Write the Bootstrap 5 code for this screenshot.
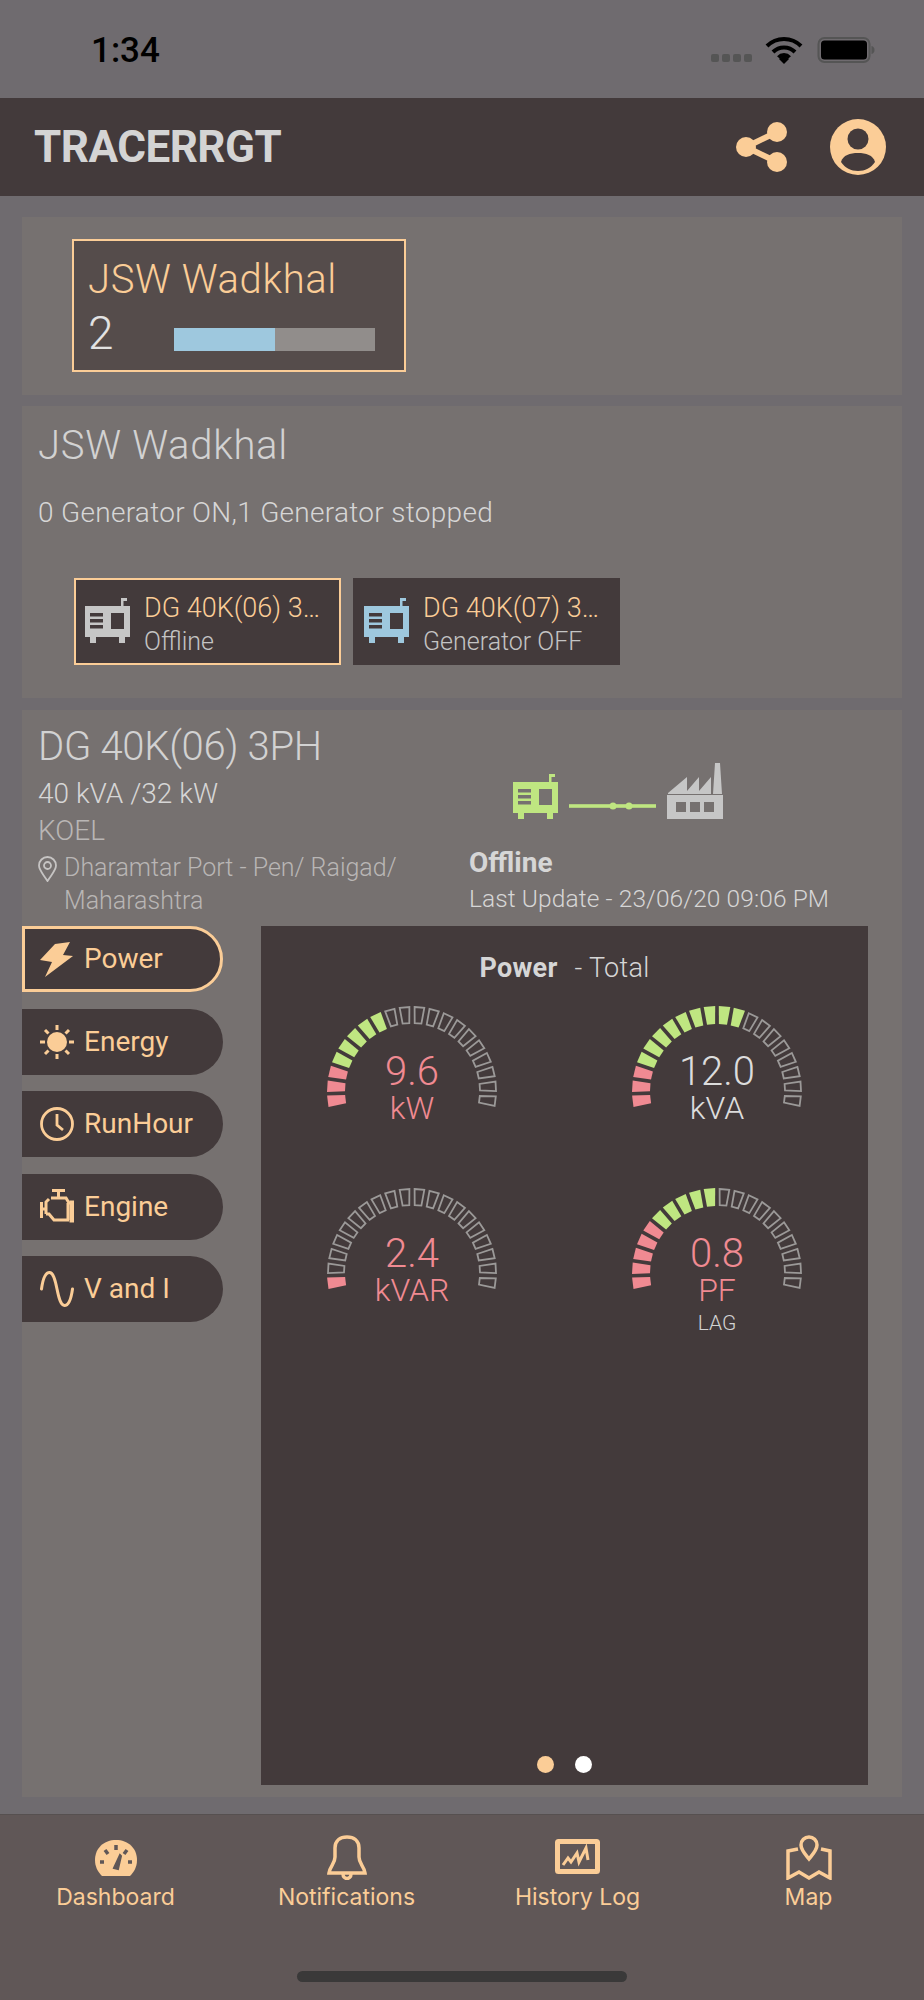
<!DOCTYPE html>
<html lang="en">
<head>
<meta charset="UTF-8">
<meta name="viewport" content="width=device-width, initial-scale=1.0">
<title>TracerRGT</title>
<link href="https://cdn.jsdelivr.net/npm/bootstrap@5.3.3/dist/css/bootstrap.min.css" rel="stylesheet">
<style>
    body {
        background: #6f6b6f;
        font-family: Roboto, sans-serif;
        font-weight: 300;
        color: #d6d6d6;
        width: 924px;
        height: 2000px;
        overflow: hidden;
    }

    /* status bar */
    .status-bar { height: 98px; padding: 33px 49px 0 91px; }
    .status-time { font-size: 35px; line-height: 36px; font-weight: 500; color: #000; }
    .signal-dots { gap: 3px; margin: 21px 13px 0 0; }
    .signal-dots span { width: 8px; height: 8px; border-radius: 2px; background: #555; }
    .status-wifi { margin: 3px 14px 0 0; }
    .status-batt { margin-top: 3px; }

    /* top bar */
    .top-bar { height: 98px; background: #433a3b; padding: 0 38px 0 34px; }
    .brand-name { font-size: 44px; font-weight: 700; color: #d4d4d4; letter-spacing: -.5px; line-height: 1; }
    .top-profile { margin-left: 42px; }

    /* panels */
    .panel-box { background: #767170; margin: 0 22px; border: 0; border-radius: 0; color: inherit; }
    .site-panel { margin-top: 21px; height: 178px; padding: 22px 49px 22px 50px; }
    .site-tile { width: 334px; height: 133px; background: #554c4b; border: 2px solid #fbcd97; padding: 15px 15px 0 14px; }
    .site-name { font-size: 40px; line-height: 48px; color: #fbcd97; letter-spacing: .6px; }
    .site-row { margin-top: 4px; }
    .site-count { font-size: 46px; line-height: 50px; color: #e2e2e2; width: 86px; }
    .site-bar { width: 201px; height: 23px; border-radius: 0; background: #918d8b; margin-top: 12px; }
    .site-bar .progress-bar { background: #9ec8de; }

    .gen-panel { margin-top: 11px; height: 292px; padding: 16px 16px 0; }
    .panel-title { font-size: 40px; line-height: 48px; color: #d2d2d2; letter-spacing: .7px; }
    .gen-summary { font-size: 28px; line-height: 34px; margin-top: 26px; color: #d6d6d6; letter-spacing: .3px; }
    .gen-tiles { margin: 48px 0 0 36px; gap: 12px; }
    .gen-tile { width: 267px; height: 87px; background: #433a3b; border: 2px solid #433a3b; padding: 0 9px; gap: 14px; }
    .gen-tile.is-active { border-color: #fbcd97; }
    .gen-tile svg { flex: none; width: 45px; height: 45px; margin-top: -2px; }
    .gen-tile-text { min-width: 0; flex: 1; padding-top: 5px; }
    .gen-tile-name { font-size: 27px; line-height: 34px; color: #fbcd97; }
    .gen-tile-state { font-size: 25px; line-height: 30px; color: #c4c4c4; margin-top: 2px; }
    .ico-grey { color: #c6c6c6; }
    .ico-blue { color: #9ec8de; }
    .ico-lime { color: #bfe681; }

    .detail-panel { margin-top: 12px; height: 1087px; padding-top: 13px; }
    .detail-head { padding-left: 16px; height: 195px; }
    .detail-left { width: 431px; flex: none; }
    .detail-left .panel-title { letter-spacing: -.3px; }
    .detail-rating { font-size: 28px; line-height: 36px; margin-top: 5px; }
    .detail-make { font-size: 28px; line-height: 36px; margin-top: 1px; color: #b9b6b5; }
    .detail-place { font-size: 25px; line-height: 33px; margin-top: 2px; color: #b9b6b5; gap: 7px; }
    .detail-place svg { flex: none; margin-top: 5px; }
    .flow-icons { margin: 40px 0 0 44px; height: 56px; gap: 11px; }
    .flow-line { margin-bottom: 8px; }
    .detail-state { font-size: 28px; font-weight: 700; line-height: 34px; margin-top: 27px; color: #d6d6d6; }
    .detail-update { font-size: 24.5px; line-height: 34px; margin-top: 2px; letter-spacing: .1px; }

    /* lower part: side buttons and gauge area */
    .detail-body { margin-top: 8px; }
    .side-menu { width: 201px; gap: 16.5px; flex: none; }
    .side-link {
        height: 66px;
        background: #433a3b;
        border-radius: 0 34px 34px 0;
        color: #fbcd97;
        font-size: 28px;
        font-weight: 400;
        padding: 0 0 0 18px;
        gap: 10px;
    }
    .side-link:hover { color: #fbcd97; }
    .side-link svg { flex: none; width: 34px; height: 36px; }
    .side-link.is-active { border: 3px solid #fbcd97; padding-left: 15px; }

    .gauge-panel { width: 607px; height: 859px; margin-left: 38px; background: #433a3b; padding-top: 24px; }
    .gauge-title { font-size: 27px; line-height: 36px; letter-spacing: .3px; }
    .gauge-title b { font-weight: 700; margin-right: 10px; }
    .gauge-grid { display: grid; grid-template-columns: 302px 302px; column-gap: 3px; grid-auto-rows: 182px; margin-top: 17px; }
    .gauge-svg { display: block; margin: 0 auto; }
    .gauge-read { margin-top: -59px; text-align: center; }
    .gauge-value { font-size: 40px; line-height: 40px; }
    .gauge-unit { font-size: 32px; line-height: 32px; }
    .gauge-note { font-size: 21px; line-height: 24px; margin-top: 5px; color: #d2d2d2; }
    .tone-red { color: #f08a92; }
    .tone-grey { color: #dcdcdc; }
    .page-dots { margin-top: auto; margin-bottom: 12px; gap: 21px; }
    .page-dots span { width: 17px; height: 17px; border-radius: 50%; background: #fff; }
    .page-dots span:first-child { background: #fbcd97; }

    /* bottom tabs */
    .tab-bar { margin-top: 17px; height: 186px; background: #605757; border-top: 1px solid #565050; padding-top: 20px; }
    .tab-item { width: 231px; color: #fbcd97; font-family: Inter, sans-serif; font-size: 23px; font-weight: 400; line-height: 28px; }
    .tab-item svg { display: block; height: 45px; margin-bottom: 3px; }
    .home-line { width: 330px; height: 11px; border-radius: 6px; background: #3a3939; margin: 60px auto 0; }
</style>
</head>
<body>

    <!-- generator drawing used in a few places -->
    <svg width="0" height="0" class="position-absolute">
        <symbol id="genset" viewBox="0 0 45 45">
            <path fill="currentColor" fill-rule="evenodd" d="M36 0h6v3h-3.500v5H45v31h-5v6h-6v-6H11v6H5v-6H0V8h36zM26 15v16h13V15zM5 15v3.500h13V15zm0 6v3.500h13V21zm0 6v3.500h13V27z"/>
        </symbol>
    </svg>

    <div class="status-bar d-flex align-items-start">
        <div class="status-time">1:34</div>
        <div class="signal-dots d-flex ms-auto"><span></span><span></span><span></span><span></span></div>
        <svg class="status-wifi" width="38" height="28" viewBox="0 0 38 28">
            <path d="M2 10a24 24 0 0 1 34 0M8 16a15.500 15.500 0 0 1 22 0M13.500 21.500a7.500 7.500 0 0 1 11 0" fill="none" stroke="#000" stroke-width="4"/>
            <path d="M19 28l-5-5 5-4 5 4z"/>
        </svg>
        <svg class="status-batt" width="58" height="28" viewBox="0 0 58 28">
            <rect x="1.500" y="2" width="51" height="24" rx="6" fill="none" stroke="#555" stroke-width="2"/>
            <rect x="4" y="4.500" width="46" height="19" rx="3.500"/>
            <path d="M54.500 10c2 .5 3 2 3 4s-1 3.500-3 4z" fill="#555"/>
        </svg>
    </div>

    <nav class="top-bar d-flex align-items-center">
        <div class="brand-name">TRACERRGT</div>
        <svg class="ms-auto" width="52" height="50" viewBox="0 0 52 50" fill="#fbcd97">
            <path d="M41 10L10 25l31 15" fill="none" stroke="#fbcd97" stroke-width="6"/>
            <circle cx="41" cy="10" r="10"/><circle cx="10" cy="25" r="10"/><circle cx="41" cy="40" r="10"/>
        </svg>
        <svg class="top-profile" width="56" height="56" viewBox="0 0 56 56">
            <circle cx="28" cy="28" r="28" fill="#fbcd97"/>
            <circle cx="28" cy="20" r="10.500" fill="#433a3b"/>
            <path d="M11 43c2-7 9-9 17-9s15 2 17 9c-4 6-10 9-17 9s-13-3-17-9z" fill="#433a3b"/>
        </svg>
    </nav>

    <section class="card panel-box site-panel">
        <div class="site-tile">
            <div class="site-name">JSW Wadkhal</div>
            <div class="site-row d-flex align-items-center">
                <div class="site-count">2</div>
                <div class="progress site-bar"><div class="progress-bar" style="width: 50%"></div></div>
            </div>
        </div>
    </section>

    <section class="card panel-box gen-panel">
        <div class="panel-title">JSW Wadkhal</div>
        <div class="gen-summary">0 Generator ON,1 Generator stopped</div>
        <div class="gen-tiles d-flex">
            <div class="gen-tile is-active d-flex align-items-center">
                <svg class="ico-grey"><use href="#genset"/></svg>
                <div class="gen-tile-text">
                    <div class="gen-tile-name text-truncate">DG 40K(06) 3PH</div>
                    <div class="gen-tile-state">Offline</div>
                </div>
            </div>
            <div class="gen-tile d-flex align-items-center">
                <svg class="ico-blue"><use href="#genset"/></svg>
                <div class="gen-tile-text">
                    <div class="gen-tile-name text-truncate">DG 40K(07) 3PH</div>
                    <div class="gen-tile-state">Generator OFF</div>
                </div>
            </div>
        </div>
    </section>

    <section class="card panel-box detail-panel">
        <div class="detail-head d-flex">
            <div class="detail-left">
                <div class="panel-title">DG 40K(06) 3PH</div>
                <div class="detail-rating">40 kVA /32 kW</div>
                <div class="detail-make">KOEL</div>
                <div class="detail-place d-flex">
                    <svg width="19" height="26" viewBox="0 0 19 26" fill="none" stroke="#c6c4c3" stroke-width="1.800">
                        <path d="M9.500 25C5 18 1 14 1 9.500a8.500 8.500 0 0 1 17 0C18 14 14 18 9.500 25z"/>
                        <circle cx="9.500" cy="9.500" r="3.500"/>
                    </svg>
                    <div>Dharamtar Port - Pen/ Raigad/<br>Maharashtra</div>
                </div>
            </div>
            <div>
                <div class="flow-icons d-flex align-items-end">
                    <svg width="45" height="45" class="ico-lime"><use href="#genset"/></svg>
                    <svg class="flow-line" width="87" height="10" viewBox="0 0 87 10" fill="#bfe681">
                        <rect y="3.200" width="87" height="3.600"/><circle cx="44" cy="5" r="3.500"/><circle cx="60" cy="5" r="3.500"/>
                    </svg>
                    <svg width="56" height="56" viewBox="0 0 56 56" fill="#c6c6c6">
                        <path d="M48 0h5l2 31h-9zM1 30l19-16v14l12-14v14l12-14v17H1z"/>
                        <path fill-rule="evenodd" d="M0 32h56v24H0zM9 39v10h10V39zm14 0v10h10V39zm14 0v10h10V39z"/>
                    </svg>
                </div>
                <div class="detail-state">Offline</div>
                <div class="detail-update">Last Update - 23/06/20 09:06 PM</div>
            </div>
        </div>

        <div class="detail-body d-flex">
            <div class="side-menu nav flex-column">
                <a class="nav-link side-link is-active d-flex align-items-center" href="#">
                    <svg viewBox="0 0 34 36" fill="#fbcd97"><path d="M15 3l15-2-7 13 10 1L5 36l7-15-12-2z"/></svg>Power
                </a>
                <a class="nav-link side-link d-flex align-items-center" href="#">
                    <svg viewBox="0 0 34 36" fill="#fbcd97" stroke="#fbcd97">
                        <circle cx="17" cy="18" r="10" stroke="none"/>
                        <path stroke-width="3" d="M17 1v5M17 30v5M0 18h5M29 18h5M5 6l3.500 3.500M25.500 26.500L29 30M29 6l-3.500 3.500M8.500 26.500L5 30"/>
                    </svg>Energy
                </a>
                <a class="nav-link side-link d-flex align-items-center" href="#">
                    <svg viewBox="0 0 34 36" fill="none" stroke="#fbcd97" stroke-width="2.800">
                        <circle cx="17" cy="18" r="15.500"/><path d="M17 8v11l6 5"/>
                    </svg>RunHour
                </a>
                <a class="nav-link side-link d-flex align-items-center" href="#">
                    <svg viewBox="0 0 34 36" fill="none" stroke="#fbcd97" stroke-width="3">
                        <path d="M12 1.500h13M18.500 2v7M11 9h15l3 5h2M28 14v17M29 31H14l-5-6H6"/>
                        <path d="M9 10l-3 3v12M1.500 13v16M1.500 20H6"/>
                        <path d="M31 13h2v19h-2z"/>
                    </svg>Engine
                </a>
                <a class="nav-link side-link d-flex align-items-center" href="#">
                    <svg viewBox="0 0 34 36" fill="none" stroke="#fbcd97" stroke-width="3" stroke-linecap="round">
                        <path d="M1.500 18C3 7 6 1.500 9.500 1.500S15 8 17 18s4 16.500 7.500 16.500S31 29 32.500 18"/>
                    </svg>V and I
                </a>
            </div>

            <div class="gauge-panel d-flex flex-column">
                <div class="gauge-title text-center"><b>Power</b> - Total</div>
                <div class="gauge-grid">
                    <div>
                        <svg class="gauge-svg" width="180" height="108" data-red="3" data-green="5"></svg>
                        <div class="gauge-read tone-red"><div class="gauge-value">9.6</div><div class="gauge-unit">kW</div></div>
                    </div>
                    <div>
                        <svg class="gauge-svg" width="180" height="108" data-red="3" data-green="9"></svg>
                        <div class="gauge-read tone-grey"><div class="gauge-value">12.0</div><div class="gauge-unit">kVA</div></div>
                    </div>
                    <div>
                        <svg class="gauge-svg" width="180" height="108" data-red="1" data-green="0"></svg>
                        <div class="gauge-read tone-red"><div class="gauge-value">2.4</div><div class="gauge-unit">kVAR</div></div>
                    </div>
                    <div>
                        <svg class="gauge-svg" width="180" height="108" data-red="5" data-green="5"></svg>
                        <div class="gauge-read tone-red"><div class="gauge-value">0.8</div><div class="gauge-unit">PF</div><div class="gauge-note">LAG</div></div>
                    </div>
                </div>
                <div class="page-dots d-flex justify-content-center"><span></span><span></span></div>
            </div>
        </div>
    </section>

    <footer class="tab-bar">
        <div class="d-flex text-center">
            <div class="tab-item d-flex flex-column align-items-center">
                <svg width="42" viewBox="0 0 42 45">
                    <path d="M7 41C3 37 0 32 0 25 0 13 9 5 21 5s21 8 21 20c0 7-3 12-7 16z" fill="#fbcd97"/>
                    <path d="M21 10v5M10 15l3 4M32 15l-3 4M5 27h4M33 27h4" stroke="#605757" stroke-width="3.500" fill="none"/>
                    <path d="M19 33l6-13 1 1-3 13z" fill="#605757" stroke="#605757" stroke-width="2"/>
                </svg>
                Dashboard
            </div>
            <div class="tab-item d-flex flex-column align-items-center">
                <svg width="40" viewBox="0 0 40 45" fill="none" stroke="#fbcd97" stroke-width="3.500">
                    <path d="M2 38h36c-1-7-6-9-6-16V13C32 6 27 2 20 2S8 6 8 13v9c0 7-5 9-6 16z"/>
                    <path d="M16 39c0 3 2 4.500 4 4.500s4-1.500 4-4.500"/>
                </svg>
                Notifications
            </div>
            <div class="tab-item d-flex flex-column align-items-center">
                <svg width="45" viewBox="0 0 45 45" fill="none" stroke="#fbcd97">
                    <rect x="2.500" y="6.500" width="40" height="30" rx="1" stroke-width="5"/>
                    <path d="M8 30l5-7 3 4 6-9 2 9 7-14 2 12" stroke-width="3"/>
                </svg>
                History Log
            </div>
            <div class="tab-item d-flex flex-column align-items-center">
                <svg width="46" viewBox="0 0 46 45" fill="none" stroke="#fbcd97" stroke-width="3.500">
                    <path d="M23 24c-4-5-8-9-8-14a8 8 0 0 1 16 0c0 5-4 9-8 14z"/>
                    <path d="M12 14L2 16v27l11-6 10 6 10-6 11 6V16l-9-2"/>
                </svg>
                Map
            </div>
        </div>
        <div class="home-line"></div>
    </footer>

    <script>
        // draws the 20 segments of each gauge, going clockwise from lower left
        var NS = 'http://www.w3.org/2000/svg';
        function polar(r, deg) {
            var a = deg * Math.PI / 180;
            return (90 - r * Math.cos(a)).toFixed(1) + ',' + (88 - r * Math.sin(a)).toFixed(1);
        }
        document.querySelectorAll('.gauge-svg').forEach(function (svg) {
            var red = +svg.dataset.red, green = +svg.dataset.green;
            for (var i = 0; i < 20; i++) {
                var mid = -7 + i * (194 / 19);
                var seg = document.createElementNS(NS, 'polygon');
                var filled = i < red + green;
                var ro = filled ? 85 : 84, ri = filled ? 67 : 68;
                var ao = filled ? 3.9 : 3.3, ai = filled ? 3.5 : 2.8;
                seg.setAttribute('points', [polar(ro, mid - ao), polar(ro, mid + ao), polar(ri, mid + ai), polar(ri, mid - ai)].join(' '));
                if (filled) {
                    seg.setAttribute('fill', i < red ? '#f08a92' : '#bfe681');
                } else {
                    seg.setAttribute('fill', 'none');
                    seg.setAttribute('stroke', '#9b9998');
                    seg.setAttribute('stroke-width', '1.8');
                }
                svg.appendChild(seg);
            }
        });
    </script>
</body>
</html>
